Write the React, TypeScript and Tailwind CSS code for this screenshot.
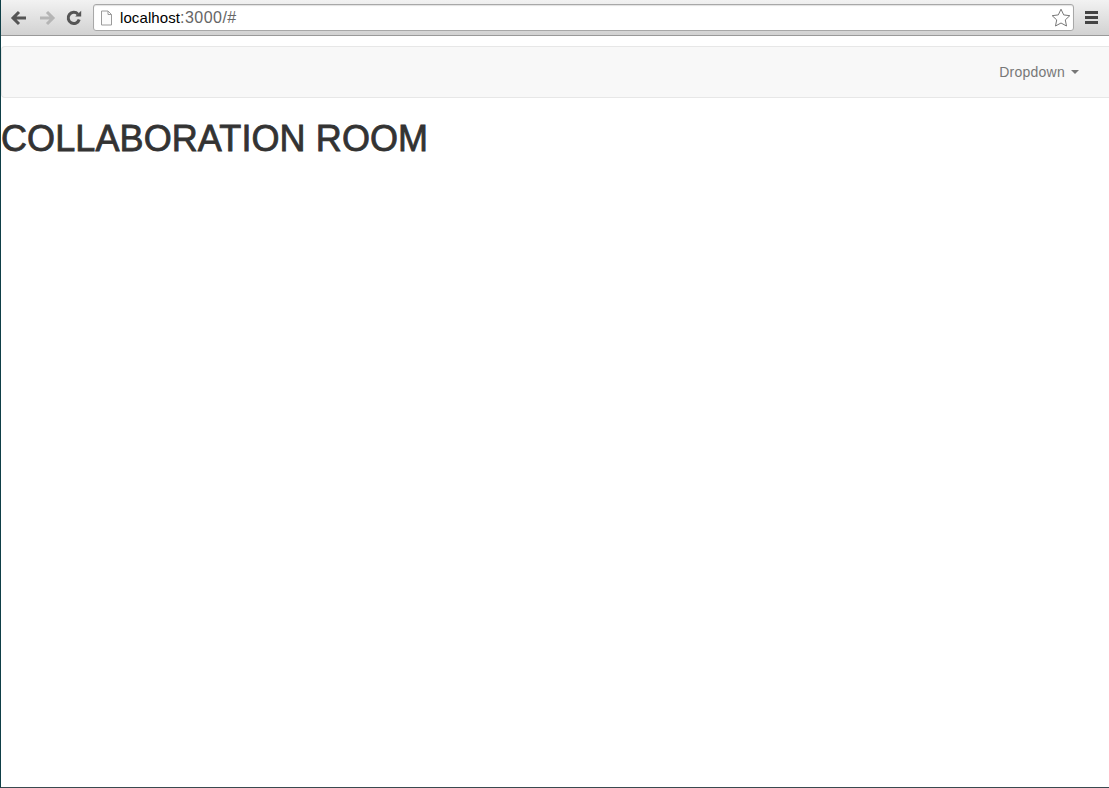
export default function App() {
  return (
    <div className="flex h-[788px] w-[1109px] flex-col overflow-hidden border-b border-l border-b-[#3a4a50] border-l-[#0f3f47] bg-white font-['Liberation_Sans',sans-serif]">
      {/* browser toolbar */}
      <div className="flex h-[36px] shrink-0 items-center border-b border-[#9a9a9a] bg-gradient-to-b from-[#f2f2f2] to-[#d2d2d2]">
        <div className="flex w-[92px] shrink-0 items-center pl-[9px]">
          <svg width="18" height="16" viewBox="0 0 18 16" fill="none" stroke="#555" strokeWidth="3">
            <path d="M16 8H3M9 2L3 8l6 6" />
          </svg>
          <svg className="ml-[10px]" width="18" height="16" viewBox="0 0 18 16" fill="none" stroke="#b5b5b5" strokeWidth="3">
            <path d="M2 8h13M9 2l6 6-6 6" />
          </svg>
          <svg className="ml-[10px]" width="16" height="16" viewBox="0 0 16 16" fill="none">
            <path d="M13.2 9.5A5.6 5.6 0 1 1 12 4.2" stroke="#555" strokeWidth="3" />
            <path d="M9.2 6.6h6V.8z" fill="#555" />
          </svg>
        </div>
        <div className="flex h-[27px] flex-1 items-center rounded-[3px] border border-[#a8a8a8] bg-white pl-[6px] pr-[2px] shadow-[inset_0_1px_1px_rgba(0,0,0,0.12)]">
          <svg width="13" height="16" viewBox="0 0 13 16" fill="#fbfbfb" stroke="#9a9a9a">
            <path d="M1.5 1h6.5l3.5 3.5v10.5h-10zM8 1v3.5h3.5" />
          </svg>
          <span className="ml-[7px] text-[15px] tracking-[0.1px] text-black">
            localhost<span className="text-[16px] tracking-[0.45px] text-[#666]">:3000/#</span>
          </span>
          <svg className="ml-auto" width="20" height="19" viewBox="0 0 20 19" fill="#fff" stroke="#777">
            <path d="M10 1.2l2.7 5.7 6.1.8-4.5 4.2 1.2 6.1-5.5-3-5.5 3 1.2-6.1-4.5-4.2 6.1-.8z" />
          </svg>
        </div>
        <div className="flex w-[35px] shrink-0 flex-col items-center gap-[2px]">
          <span className="h-[3px] w-[13px] bg-[#444]" />
          <span className="h-[3px] w-[13px] bg-[#444]" />
          <span className="h-[3px] w-[13px] bg-[#444]" />
        </div>
      </div>

      {/* navbar */}
      <div className="mt-[10px] flex h-[52px] shrink-0 items-center justify-end rounded-l-[4px] border border-r-0 border-[#e7e7e7] bg-[#f8f8f8] pr-[30px]">
        <span className="text-[14px] tracking-[0.25px] text-[#777]">Dropdown</span>
        <span className="ml-[6px] h-0 w-0 border-x-[4px] border-t-[4px] border-x-transparent border-t-[#777]" />
      </div>

      <h1 className="mt-[21px] text-[36px] leading-[40px] font-medium tracking-[0.1px] text-[#333] [-webkit-text-stroke:0.8px_#333]">
        COLLABORATION ROOM
      </h1>
    </div>
  );
}
